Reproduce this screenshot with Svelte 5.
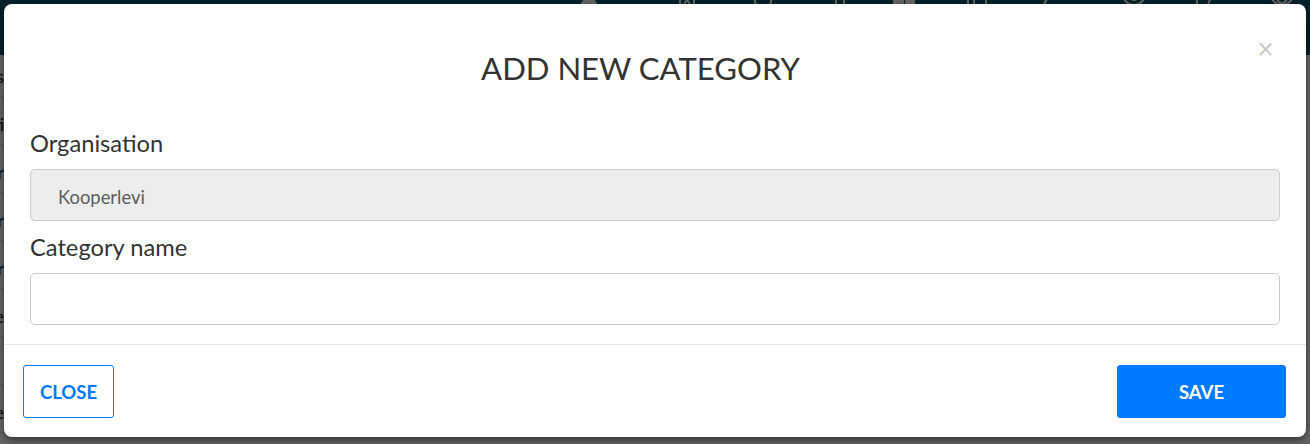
<script>
    const rows = ['s', 'ti', 'r', 'r', 'r', 'e', '', 'e'];
    // gaps between the nav icons, they are not evenly spaced
    const navGaps = [0, 74, 52, 53, 40, 48, 55, 55, 48, 52];
    let organisation = 'Kooperlevi';
    let categoryName = '';
</script>

<style>
    :global(body) {
        margin: 0;
        font-family: Lato, "Liberation Sans", sans-serif;
        background: #fff;
    }

    .page {
        position: relative;
        height: 444px;
        overflow: hidden;
    }

    .topbar {
        position: relative;
        height: 55px;
        background: #08566f;
        display: flex;
        padding-left: 577px;
    }

    .nav-icon {
        width: 24px;
        height: 24px;
        margin-top: -14px;
        flex: none;
        fill: none;
        stroke: #fff;
        stroke-width: 2;
    }

    .rows {
        margin-top: -6px;
    }

    .row {
        height: 48px;
        box-sizing: border-box;
        padding-top: 6px;
        border-bottom: 1px solid #dedede;
        display: flex;
        align-items: center;
        justify-content: flex-end;
        width: 100%;
        max-width: 4px;
        overflow: hidden;
        font-size: 18px;
        color: #222;
    }

    .backdrop {
        position: absolute;
        inset: 0;
        background: rgba(0, 0, 0, 0.6);
    }

    .modal {
        margin: 4px 4px 0;
        height: 433px;
        background: #fff;
        border-radius: 8px;
        box-shadow: 0 3px 9px rgba(0, 0, 0, 0.5);
        display: flex;
        flex-direction: column;
        color: #333;
    }

    .modal-header {
        display: flex;
        align-items: flex-start;
        padding: 45px 26px 0;
        height: 100px;
        box-sizing: border-box;
    }

    .modal-title {
        flex: 1;
        margin: 0;
        text-align: center;
        font-size: 31.1px;
        font-weight: 400;
        line-height: 38px;
    }

    .close {
        width: 29px;
        margin: -16px 0 0 0;
        padding: 0;
        border: none;
        background: none;
        color: #c8c8c8;
        font-family: Lato, sans-serif;
        font-size: 28px;
        line-height: 30px;
    }

    .modal-body {
        flex: 1;
        padding: 19px 26px 0;
        display: flex;
        flex-direction: column;
    }

    label {
        font-size: 23.7px;
        line-height: 40px;
        margin-bottom: 6px;
    }

    input {
        height: 52px;
        box-sizing: border-box;
        width: 100%;
        border: 1px solid #ccc;
        border-radius: 5px;
        padding: 3px 27px 0;
        margin-bottom: 6px;
        font-family: inherit;
        font-size: 18.4px;
        color: #555;
        background: #fff;
    }

    input:disabled {
        background: #ededed;
        color: #5c5c5c;
    }

    .modal-footer {
        height: 93px;
        box-sizing: border-box;
        border-top: 1px solid #e6e6e6;
        padding: 20px 20px 0 19px;
        display: flex;
        justify-content: space-between;
        align-items: flex-start;
    }

    .btn {
        height: 53px;
        border-radius: 3px;
        font-family: inherit;
        font-size: 18.5px;
        font-weight: 700;
        box-sizing: border-box;
    }

    .btn-close {
        width: 91px;
        background: #fff;
        color: #007bff;
        border: 1px solid #007bff;
    }

    .btn-save {
        width: 169px;
        background: #007bff;
        color: #fff;
        border: 1px solid #007bff;
    }
</style>

<div class="page">
    <div class="topbar">
        {#each navGaps as gap, i}
            <svg class="nav-icon" viewBox="0 0 24 24" style="margin-left: {gap}px">
                {#if i === 0}
                    <path d="M12 8l8 11H4z" fill="#fff" />
                {:else if i === 1}
                    <path d="M5 2v17M19 2v17M9 18l3-4 3 4" />
                {:else if i === 2}
                    <path d="M4 2v14a3 3 0 0 0 3 3h10a3 3 0 0 0 3-3V2" />
                {:else if i === 3}
                    <path d="M8 2v17M16 2v17" />
                {:else if i === 4}
                    <rect x="2" y="2" width="9" height="17" fill="#fff" /><rect x="14" y="2" width="8" height="17" fill="#fff" />
                {:else if i === 5}
                    <path d="M4 2v17M10 18V8h12v11" />
                {:else if i === 6}
                    <path d="M1 19a13 13 0 0 1 18-9M19 2l3 8" />
                {:else if i === 7}
                    <circle cx="12" cy="8" r="11" /><circle cx="12" cy="11" r="3" fill="#fff" />
                {:else if i === 8}
                    <path d="M3 2v17M20 2l-6 17" />
                {:else}
                    <circle cx="12" cy="8" r="11" /><path d="M7 14l5 4 5-4" />
                {/if}
            </svg>
        {/each}
    </div>

    <div class="rows">
        {#each rows as letter}
            <div class="row">{letter}</div>
        {/each}
    </div>

    <div class="backdrop">
        <div class="modal">
            <div class="modal-header">
                <h2 class="modal-title">ADD NEW CATEGORY</h2>
                <button class="close">×</button>
            </div>
            <div class="modal-body">
                <label for="org">Organisation</label>
                <input id="org" type="text" bind:value={organisation} disabled />
                <label for="cat">Category name</label>
                <input id="cat" type="text" bind:value={categoryName} />
            </div>
            <div class="modal-footer">
                <button class="btn btn-close">CLOSE</button>
                <button class="btn btn-save">SAVE</button>
            </div>
        </div>
    </div>
</div>
